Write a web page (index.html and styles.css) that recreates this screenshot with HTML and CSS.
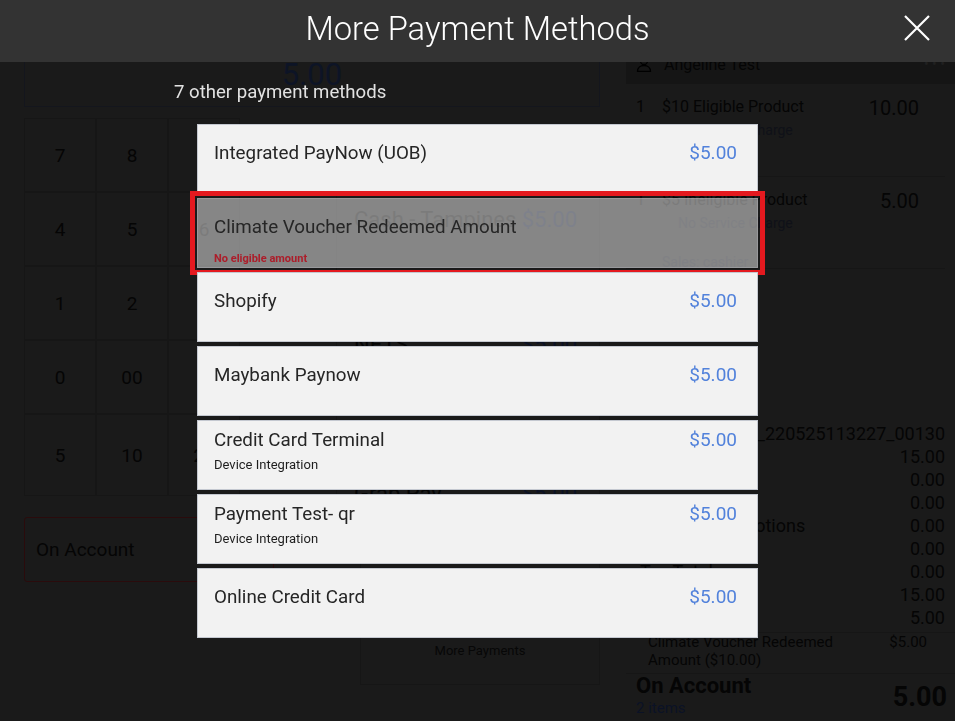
FILE: index.html
```html
<!DOCTYPE html>
<html lang="en">
<head>
    <meta charset="UTF-8">
    <title>More Payment Methods</title>
    <link rel="stylesheet" href="styles.css">
</head>
<body>

<!-- POS screen underneath the dialog (drawn in its dimmed colours) -->
<div class="pos">
    <div class="pos-left">
        <div class="amount-box">5.00</div>

        <div class="pad-area">
            <div class="key-col">
                <div class="keypad">
                    <div class="key">7</div><div class="key">8</div><div class="key">9</div>
                    <div class="key">4</div><div class="key">5</div><div class="key">6</div>
                    <div class="key">1</div><div class="key">2</div><div class="key">3</div>
                    <div class="key">0</div><div class="key">00</div><div class="key">.</div>
                    <div class="key">5</div><div class="key">10</div><div class="key">20</div>
                </div>
                <div class="on-account">On Account</div>
            </div>
            <div class="pay-col">
                <div class="pay-btn first"><span>Cash - Tampines</span><span class="pay-price">$5.00</span></div>
                <div class="pay-btn second"><span>NETS</span><span class="pay-price">$5.00</span></div>
                <div class="pay-btn third"><span>Grab Pay</span><span class="pay-price">$5.00</span></div>
                <div class="more-btn">More Payments</div>
            </div>
        </div>
    </div>

    <div class="pos-right">
        <div class="customer">
            <svg class="person" width="16" height="16" viewBox="0 0 16 16"><circle cx="8" cy="5" r="3.5" fill="none" stroke="#000" stroke-width="1.3"/><path d="M1.5 15.5c0-4 3-6 6.5-6s6.5 2 6.5 6z" fill="none" stroke="#000" stroke-width="1.3"/></svg>
            <span class="customer-name">Angeline Test</span>
            <span class="dots">&bull; &bull; &bull;</span>
        </div>

        <div class="line-item">
            <div class="item-top"><span class="qty">1</span><span class="item-name">$10 Eligible Product</span><span class="item-price">10.00</span></div>
            <div class="item-note">No Service Charge</div>
        </div>
        <div class="line-item second">
            <div class="item-top"><span class="qty">1</span><span class="item-name">$5 Ineligible Product</span><span class="item-price">5.00</span></div>
            <div class="item-note">No Service Charge</div>
            <div class="item-sales">Sales: cashier</div>
        </div>

        <div class="spacer"></div>

        <div class="summary">
            <div class="sum-row"><span>Receipt</span><span>POS2_220525113227_00130</span></div>
            <div class="sum-row"><span>Subtotal</span><span>15.00</span></div>
            <div class="sum-row"><span>Discount</span><span>0.00</span></div>
            <div class="sum-row"><span>Service</span><span>0.00</span></div>
            <div class="sum-row"><span class="promo">Applied Promotions</span><span>0.00</span></div>
            <div class="sum-row"><span>Rounding</span><span>0.00</span></div>
            <div class="sum-row"><span>Tax Total</span><span>0.00</span></div>
            <div class="sum-row"><span>Total</span><span>15.00</span></div>
            <div class="sum-row"><span>Balance</span><span>5.00</span></div>
        </div>
        <div class="voucher-row">
            <span>Climate Voucher Redeemed<br>Amount ($10.00)</span>
            <span>$5.00</span>
        </div>
        <div class="total-row">
            <div>
                <div class="total-label">On Account</div>
                <div class="total-items">2 items</div>
            </div>
            <div class="total-amount">5.00</div>
        </div>
    </div>
</div>

<!-- dialog -->
<div class="overlay">
    <div class="dialog-head">
        <h1>More Payment Methods</h1>
        <svg class="close" width="26" height="26" viewBox="0 0 26 26"><path d="M1 1L25 25M25 1L1 25" stroke="#fff" stroke-width="2.2" fill="none"/></svg>
    </div>

    <div class="dialog-body">
        <div class="count">7 other payment methods</div>

        <div class="method-list">
            <div class="method">
                <div class="method-name">Integrated PayNow (UOB)</div>
                <div class="method-price">$5.00</div>
            </div>
            <div class="flagged">
                <div class="method disabled">
                    <div>
                        <div class="method-name">Climate Voucher Redeemed Amount</div>
                        <div class="method-warn">No eligible amount</div>
                    </div>
                </div>
            </div>
            <div class="method">
                <div class="method-name">Shopify</div>
                <div class="method-price">$5.00</div>
            </div>
            <div class="method">
                <div class="method-name">Maybank Paynow</div>
                <div class="method-price">$5.00</div>
            </div>
            <div class="method with-sub">
                <div>
                    <div class="method-name">Credit Card Terminal</div>
                    <div class="method-sub">Device Integration</div>
                </div>
                <div class="method-price">$5.00</div>
            </div>
            <div class="method with-sub">
                <div>
                    <div class="method-name">Payment Test- qr</div>
                    <div class="method-sub">Device Integration</div>
                </div>
                <div class="method-price">$5.00</div>
            </div>
            <div class="method">
                <div class="method-name">Online Credit Card</div>
                <div class="method-price">$5.00</div>
            </div>
        </div>
    </div>
</div>

</body>
</html>
```

FILE: styles.css
```css
body {
    margin: 0;
    font-family: Roboto, "Liberation Sans", sans-serif;
    overflow: hidden;
}

/* ---- POS screen, dimmed behind the dialog ---- */

.pos {
    display: flex;
    height: 721px;
    background: #1a1a1a;
    color: #050505;
}

.pos-left {
    width: 576px;
    margin-left: 24px;
    display: flex;
    flex-direction: column;
}

.amount-box {
    height: 107px;
    flex-shrink: 0;
    box-sizing: border-box;
    border: 1px solid #14161d;
    display: flex;
    align-items: flex-end;
    justify-content: center;
    padding-bottom: 13px;
    font-size: 31px;
    color: #0d1426;
}

.pad-area {
    display: flex;
    margin-top: 11px;
}

.key-col {
    width: 216px;
}

.keypad {
    display: grid;
    grid-template-columns: repeat(3, 72px);
    grid-template-rows: repeat(4, 74px) 82px;
}

.key {
    border: 1px solid #161616;
    display: flex;
    align-items: center;
    justify-content: center;
    font-size: 19px;
}

.on-account {
    width: 250px;
    height: 65px;
    margin-top: 21px;
    box-sizing: border-box;
    border: 1px solid #2a0b0c;
    border-radius: 3px;
    padding: 20px 11px;
    font-size: 19px;
}

.pay-col {
    flex: 1;
    display: flex;
    flex-direction: column;
    padding: 74px 0 0 96px;
}

.pay-btn {
    box-sizing: border-box;
    border: 1px solid #161616;
    display: flex;
    justify-content: space-between;
    padding: 14px 22px 0 17px;
    font-size: 22px;
}

.pay-btn.first { height: 125px; }
.pay-btn.second { height: 149px; }
.pay-btn.third { height: 89px; }

.pay-price {
    color: #0b1124;
}

.more-btn {
    height: 130px;
    margin-left: 24px;
    border: 1px solid #161616;
    display: flex;
    align-items: flex-end;
    justify-content: center;
    padding-bottom: 26px;
    box-sizing: border-box;
    font-size: 13px;
    color: #070707;
}

.pos-right {
    width: 329px;
    margin-left: 26px;
    display: flex;
    flex-direction: column;
}

.customer {
    height: 40px;
    flex-shrink: 0;
    margin-top: 44px;
    display: flex;
    align-items: center;
    gap: 12px;
    padding: 0 10px;
    background: #151515;
    font-size: 16px;
}

.customer-name {
    flex: 1;
}

.dots {
    color: #202020;
    font-size: 14px;
}

.line-item {
    flex-shrink: 0;
    height: 93px;
    box-sizing: border-box;
    border-bottom: 1px solid #161616;
    padding: 12px 26px 0 10px;
    margin-right: 10px;
}

.line-item.second {
    height: 92px;
}

.item-top {
    display: flex;
    align-items: center;
    height: 20px;
    font-size: 16px;
}

.qty {
    width: 26px;
}

.item-name {
    flex: 1;
}

.item-price {
    margin-top: 4px;
    font-size: 20px;
}

.item-note {
    margin: 6px 0 0 42px;
    font-size: 14px;
    line-height: 17px;
    color: #0f1118;
}

.item-sales {
    margin: 22px 0 0 26px;
    font-size: 14px;
    line-height: 17px;
    color: #0f1118;
}

.spacer {
    flex: 1;
}

.summary {
    padding: 0 10px 3px 14px;
}

.sum-row {
    display: flex;
    justify-content: space-between;
    height: 23px;
    line-height: 23px;
    font-size: 18px;
}

.promo {
    margin-left: 7px;
}

.voucher-row {
    display: flex;
    justify-content: space-between;
    border-top: 1px solid #161616;
    padding: 0 28px 4px 22px;
    font-size: 15px;
    line-height: 18px;
    color: #050505;
}

.total-row {
    display: flex;
    justify-content: space-between;
    border-top: 1px solid #161616;
    padding: 0 8px 0 10px;
    height: 47px;
}

.total-label {
    font-size: 22px;
    font-weight: bold;
    line-height: 24px;
}

.total-items {
    font-size: 15px;
    line-height: 20px;
    color: #0b1226;
}

.total-amount {
    margin-top: 7px;
    font-size: 27px;
    font-weight: bold;
}

/* ---- dialog ---- */

.overlay {
    position: fixed;
    inset: 0;
}

.dialog-head {
    height: 62px;
    box-sizing: border-box;
    padding-bottom: 5px;
    background: #333;
    display: flex;
    align-items: center;
    justify-content: center;
    position: relative;
}

.dialog-head h1 {
    margin: 0;
    font-size: 32.7px;
    font-weight: 300;
    color: #fff;
}

.close {
    position: absolute;
    right: 25px;
    top: 15px;
}

.dialog-body {
    width: 607px;
    margin: 0 auto;
}

.count {
    padding-top: 18px;
    line-height: 24px;
    font-size: 18.6px;
    color: #e2e2e2;
}

.method-list {
    margin: 20px 23px 0 23px;
    display: flex;
    flex-direction: column;
    gap: 4px;
}

.method {
    height: 70px;
    box-sizing: border-box;
    background: #f2f2f2;
    border: 1px solid #c4c8d0;
    display: flex;
    justify-content: space-between;
    padding: 16px 20px 0 16px;
}

.method.with-sub {
    padding-top: 7px;
}

.method-name {
    font-size: 18.8px;
    line-height: 24px;
    color: #262626;
}

.method-price {
    font-size: 19px;
    line-height: 24px;
    color: #5282db;
}

.method-sub {
    margin-top: 4px;
    font-size: 13px;
    line-height: 18px;
    color: #1e1e1e;
}

/* not selectable: the screen behind shows through */
.method.disabled {
    background: rgba(242, 242, 242, 0.5);
    border-color: rgba(196, 200, 208, 0.3);
}

.method-warn {
    margin-top: 13px;
    font-size: 11px;
    line-height: 14px;
    font-weight: bold;
    color: #ad1d2a;
}

.flagged {
    outline: 5px solid #e4191f;
    outline-offset: 2px;
}
```
